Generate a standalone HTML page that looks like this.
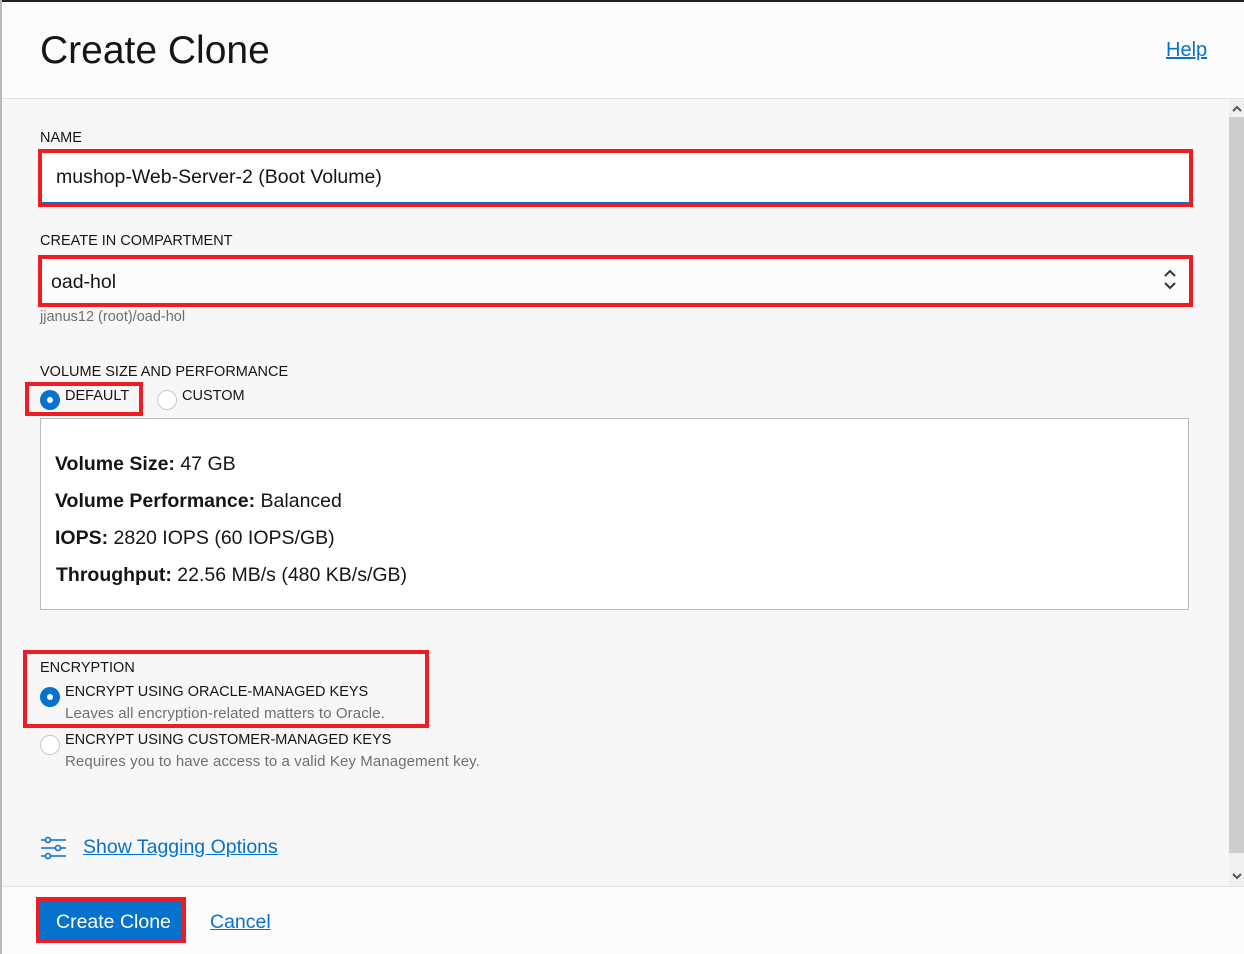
<!DOCTYPE html>
<html><head><meta charset="utf-8"><style>
*{box-sizing:border-box;margin:0;padding:0}
body{width:1244px;height:954px;overflow:hidden;background:#f7f7f7;font-family:"Liberation Sans",Arial,sans-serif;color:#161513;position:relative}
.a{position:absolute}
.red{position:absolute;border:4px solid #ee1c25}
.lbl{font-size:14.5px;color:#161513}
.radio{position:absolute;width:20px;height:20px;border-radius:50%}
.on{background:#0572ce}
.on::after{content:"";position:absolute;left:7px;top:7px;width:6px;height:6px;border-radius:50%;background:#fff}
.off{background:#fff;border:1px solid #c9c9c9}
a{color:#0572ce;text-decoration:underline}
.desc{font-size:15px;color:#6f6f6f;letter-spacing:0.1px}
</style></head><body>
<div class="a" style="left:0;top:0;width:1244px;height:2px;background:#1a222c"></div>
<div class="a" style="left:0;top:0;width:2px;height:954px;background:#b9b9b9"></div>
<div class="a" style="left:2px;top:2px;width:1242px;height:97px;background:#fcfcfc;border-bottom:1px solid #e2e2e2"></div>
<div class="a" style="left:40px;top:29px;font-size:39px;color:#161513">Create Clone</div>
<div class="a" style="left:1166px;top:39px;font-size:20px"><a>Help</a></div>

<div class="a" style="left:1229px;top:100px;width:15px;height:786px;background:#f0f0f0"></div>
<div class="a" style="left:1229px;top:117px;width:15px;height:736px;background:#cdcdcd"></div>
<svg class="a" style="left:1232px;top:105px" width="10" height="8"><path d="M1 6l4-4 4 4" stroke="#555" stroke-width="2" fill="none"/></svg>
<svg class="a" style="left:1232px;top:873px" width="10" height="8"><path d="M1 1l4 4 4-4" stroke="#555" stroke-width="2" fill="none"/></svg>

<div class="a lbl" style="left:40px;top:130px">NAME</div>
<div class="red" style="left:38px;top:149px;width:1155px;height:58px"></div>
<div class="a" style="left:42px;top:153px;width:1147px;height:50px;background:#fff;border-bottom:1px solid #0572ce"></div>
<div class="a" style="left:56px;top:166px;font-size:19.5px">mushop-Web-Server-2 (Boot Volume)</div>

<div class="a lbl" style="left:40px;top:233px">CREATE IN COMPARTMENT</div>
<div class="red" style="left:38px;top:255px;width:1155px;height:52px"></div>
<div class="a" style="left:42px;top:259px;width:1147px;height:44px;background:#fcfcfc"></div>
<div class="a" style="left:51px;top:271px;font-size:19.5px">oad-hol</div>
<svg class="a" style="left:1163px;top:268px" width="14" height="24"><path d="M2 8l5-5 5 5M2 15l5 5 5-5" stroke="#333" stroke-width="2" fill="none"/></svg>
<div class="a" style="left:40px;top:309px;font-size:14.5px;color:#6f6f6f">jjanus12 (root)/oad-hol</div>

<div class="a lbl" style="left:40px;top:364px">VOLUME SIZE AND PERFORMANCE</div>
<div class="red" style="left:25px;top:382px;width:118px;height:34px"></div>
<div class="radio on" style="left:40px;top:390px"></div>
<div class="a lbl" style="left:65px;top:388px">DEFAULT</div>
<div class="radio off" style="left:157px;top:390px"></div>
<div class="a lbl" style="left:182px;top:388px">CUSTOM</div>

<div class="a" style="left:40px;top:418px;width:1149px;height:192px;background:#fff;border:1px solid #b6bcc4"></div>
<div class="a" style="left:55px;top:446px;font-size:19.5px;line-height:37px">
<div><b>Volume Size:</b> 47 GB</div>
<div><b>Volume Performance:</b> Balanced</div>
<div><b>IOPS:</b> 2820 IOPS (60 IOPS/GB)</div>
<div style="margin-left:1px"><b>Throughput:</b> 22.56 MB/s (480 KB/s/GB)</div>
</div>

<div class="red" style="left:23px;top:650px;width:406px;height:78px"></div>
<div class="a lbl" style="left:40px;top:660px">ENCRYPTION</div>
<div class="radio on" style="left:40px;top:687px"></div>
<div class="a lbl" style="left:65px;top:684px">ENCRYPT USING ORACLE-MANAGED KEYS</div>
<div class="a desc" style="left:65px;top:705px">Leaves all encryption-related matters to Oracle.</div>
<div class="radio off" style="left:40px;top:735px"></div>
<div class="a lbl" style="left:65px;top:732px">ENCRYPT USING CUSTOMER-MANAGED KEYS</div>
<div class="a desc" style="left:65px;top:753px">Requires you to have access to a valid Key Management key.</div>

<svg class="a" style="left:40px;top:835px" width="28" height="26" fill="none" stroke="#0572ce" stroke-width="1.6">
<circle cx="8" cy="5" r="2.5"/><path d="M1 5h4.5M10.5 5H26"/>
<circle cx="18" cy="13" r="2.5"/><path d="M1 13h14.5M20.5 13H26"/>
<circle cx="8" cy="21" r="2.5"/><path d="M1 21h4.5M10.5 21H26"/>
</svg>
<div class="a" style="left:83px;top:836px;font-size:19.5px"><a>Show Tagging Options</a></div>

<div class="a" style="left:2px;top:886px;width:1242px;height:68px;background:#fcfcfc;border-top:1px solid #e2e2e2"></div>
<div class="red" style="left:36px;top:897px;width:150px;height:46px"></div>
<div class="a" style="left:40px;top:901px;width:142px;height:38px;background:#0572ce"></div>
<div class="a" style="left:56px;top:911px;font-size:19.5px;color:#fff">Create Clone</div>
<div class="a" style="left:210px;top:911px;font-size:19.5px"><a>Cancel</a></div>
</body></html>
